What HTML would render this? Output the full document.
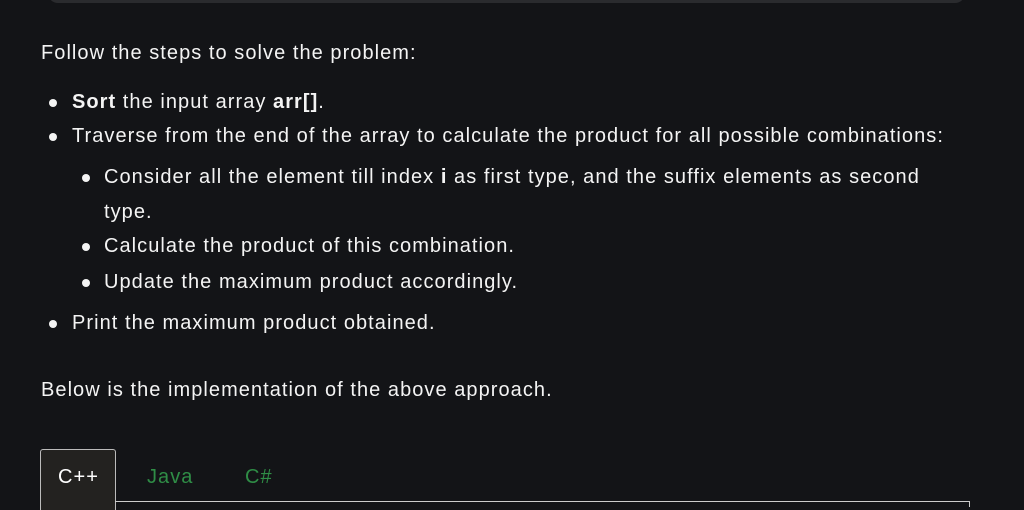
<!DOCTYPE html>
<html><head><style>
body{margin:0;width:1024px;height:506px;background:#131417;overflow:hidden;position:relative;font-family:"Liberation Sans",sans-serif;color:#f4f4f4;}
.top{position:absolute;left:48px;top:-20px;width:917px;height:23px;background:#2a2b2e;border-radius:0 0 10px 10px;}
.t{position:absolute;font-size:20px;white-space:nowrap;letter-spacing:1.05px;}
.b{position:absolute;width:8px;height:8px;border-radius:50%;background:#f4f4f4;}
.tab{position:absolute;left:40px;top:449px;width:74px;height:60px;background:#232220;border:1px solid #bbb;border-bottom:none;border-radius:3px 3px 0 0;}
.line{position:absolute;left:115px;top:501px;width:855px;height:1px;background:#ccc;}
.line2{position:absolute;left:969px;top:501px;width:1px;height:6px;background:#ccc;}
</style></head><body>
<div class="top"></div>
<div class="t" style="left:41px;top:42px">Follow the steps to solve the problem:</div>
<div class="b" style="left:49px;top:99px"></div>
<div class="t" style="left:72px;top:91px"><b>Sort</b> the input array <b>arr[]</b>.</div>
<div class="b" style="left:49px;top:133px"></div>
<div class="t" style="left:72px;top:125px">Traverse from the end of the array to calculate the product for all possible combinations:</div>
<div class="b" style="left:82px;top:174px"></div>
<div class="t" style="left:104px;top:166px">Consider all the element till index <b>i</b> as first type, and the suffix elements as second</div>
<div class="t" style="left:104px;top:201px">type.</div>
<div class="b" style="left:82px;top:243px"></div>
<div class="t" style="left:104px;top:235px">Calculate the product of this combination.</div>
<div class="b" style="left:82px;top:279px"></div>
<div class="t" style="left:104px;top:271px">Update the maximum product accordingly.</div>
<div class="b" style="left:49px;top:320px"></div>
<div class="t" style="left:72px;top:312px">Print the maximum product obtained.</div>
<div class="t" style="left:41px;top:379px">Below is the implementation of the above approach.</div>
<div class="tab"></div>
<div class="line"></div><div class="line2"></div>
<div class="t" style="left:58px;top:466px;color:#fff">C++</div>
<div class="t" style="left:147px;top:466px;color:#2f8d46">Java</div>
<div class="t" style="left:245px;top:466px;color:#2f8d46">C#</div>
</body></html>
